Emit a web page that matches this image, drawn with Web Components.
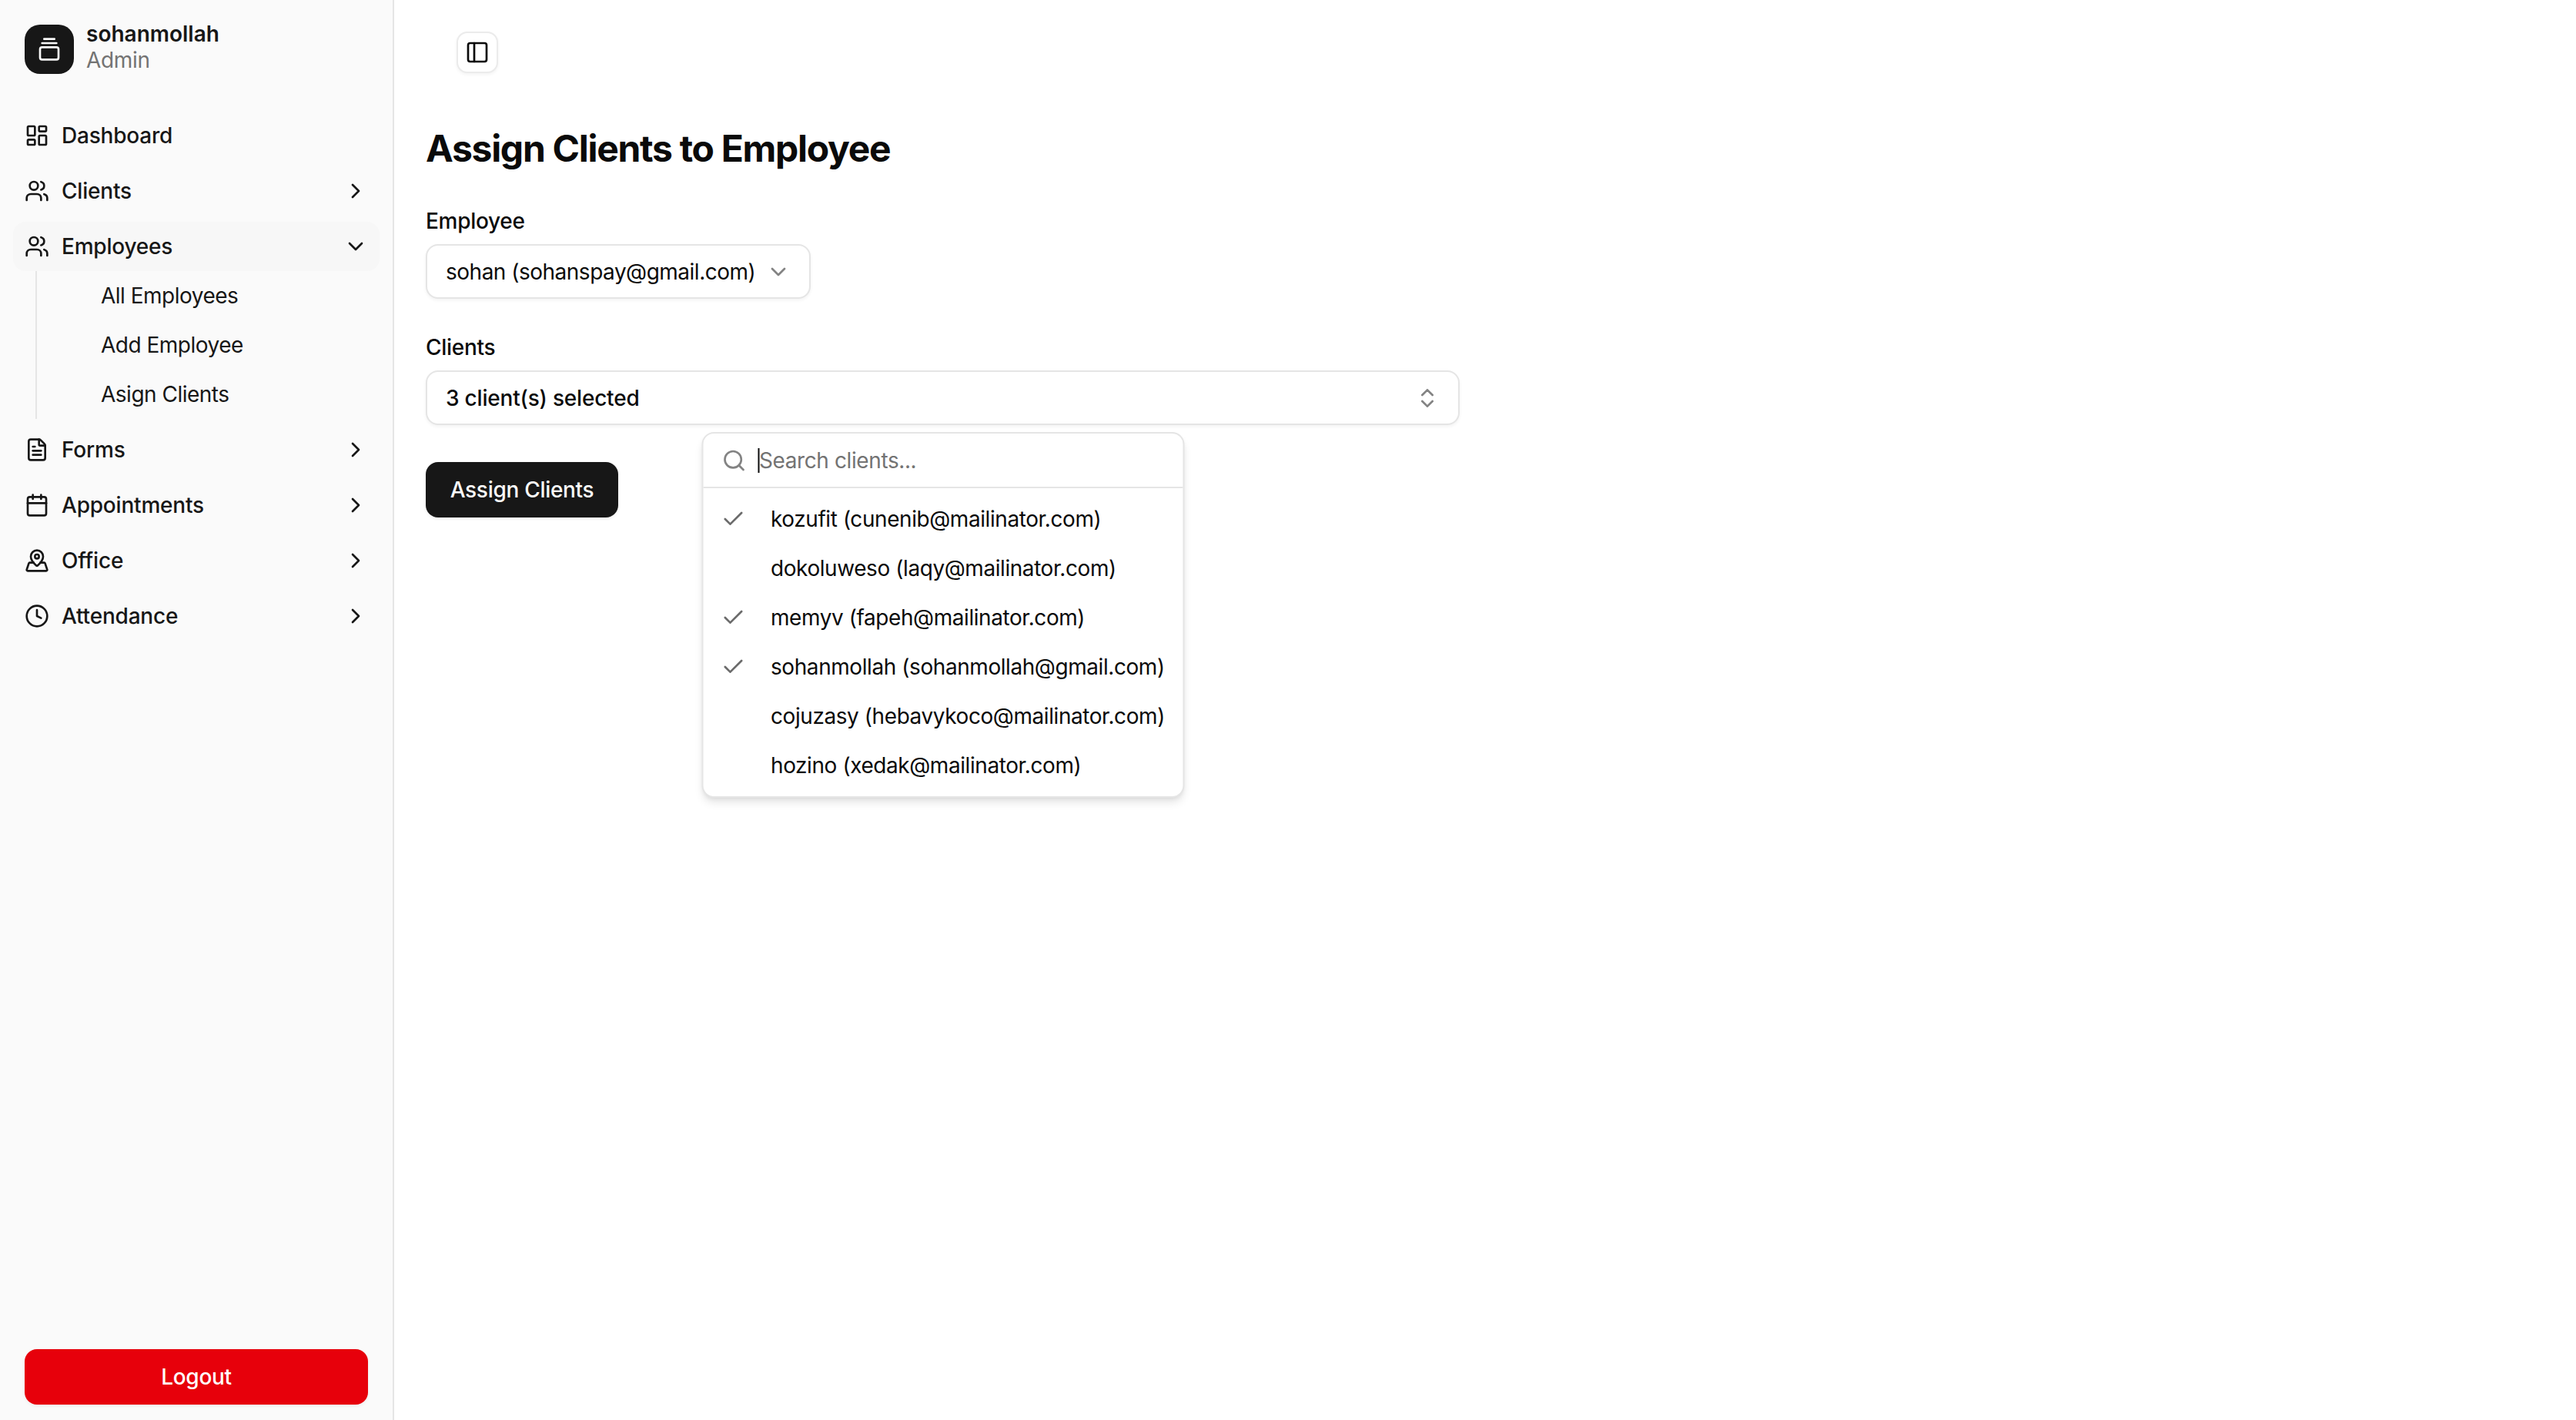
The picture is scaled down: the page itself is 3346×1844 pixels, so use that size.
<!DOCTYPE html>
<html lang="en">
<head>
<meta charset="utf-8">
<title>Assign Clients to Employee</title>
<style>
  html, body { margin: 0; height: 100%; background: #fff; }
  body { font-family: Inter, "Liberation Sans", sans-serif; font-size: 28px; line-height: 40px; color: #0a0a0a; }
</style>
</head>
<body>
<app-shell>
  <side-bar slot="side" name="sohanmollah" role-name="Admin">
    <nav-item icon="dashboard">Dashboard</nav-item>
    <nav-item icon="users" arrow="right">Clients</nav-item>
    <nav-item icon="users" arrow="down" active>Employees</nav-item>
    <sub-nav>
      <sub-item>All Employees</sub-item>
      <sub-item>Add Employee</sub-item>
      <sub-item>Asign Clients</sub-item>
    </sub-nav>
    <nav-item icon="file" arrow="right">Forms</nav-item>
    <nav-item icon="calendar" arrow="right">Appointments</nav-item>
    <nav-item icon="pin" arrow="right">Office</nav-item>
    <nav-item icon="clock" arrow="right">Attendance</nav-item>
  </side-bar>
  <assign-form>
    <select-box slot="employee" label="Employee" icon="down" style="--box-width:500px">sohan (sohanspay@gmail.com)</select-box>
    <select-box slot="clients" label="Clients" icon="updown" style="--value-weight:500;--value-spacing:-.2px">
      3 client(s) selected
      <client-popover slot="popover" placeholder="Search clients...">
        <client-option checked>kozufit (cunenib@mailinator.com)</client-option>
        <client-option>dokoluweso (laqy@mailinator.com)</client-option>
        <client-option checked>memyv (fapeh@mailinator.com)</client-option>
        <client-option checked>sohanmollah (sohanmollah@gmail.com)</client-option>
        <client-option>cojuzasy (hebavykoco@mailinator.com)</client-option>
        <client-option>hozino (xedak@mailinator.com)</client-option>
      </client-popover>
    </select-box>
  </assign-form>
</app-shell>

<script>
const ICONS = {
  logo: '<path d="M7 2h10"/><path d="M5 6h14"/><rect width="18" height="12" x="3" y="10" rx="2"/>',
  dashboard: '<rect width="7" height="9" x="3" y="3" rx="1"/><rect width="7" height="5" x="14" y="3" rx="1"/><rect width="7" height="9" x="14" y="12" rx="1"/><rect width="7" height="5" x="3" y="16" rx="1"/>',
  users: '<path d="M16 21v-2a4 4 0 0 0-4-4H6a4 4 0 0 0-4 4v2"/><path d="M16 3.128a4 4 0 0 1 0 7.744"/><path d="M22 21v-2a4 4 0 0 0-3-3.87"/><circle cx="9" cy="7" r="4"/>',
  file: '<path d="M6 22a2 2 0 0 1-2-2V4a2 2 0 0 1 2-2h8a2.4 2.4 0 0 1 1.704.706l3.588 3.588A2.4 2.4 0 0 1 20 8v12a2 2 0 0 1-2 2z"/><path d="M14 2v5a1 1 0 0 0 1 1h5"/><path d="M10 9H8"/><path d="M16 13H8"/><path d="M16 17H8"/>',
  calendar: '<path d="M8 2v4"/><path d="M16 2v4"/><rect width="18" height="18" x="3" y="4" rx="2"/><path d="M3 10h18"/>',
  pin: '<path d="M18 8c0 3.613-3.869 7.429-5.393 8.795a1 1 0 0 1-1.214 0C9.87 15.429 6 11.613 6 8a6 6 0 0 1 12 0"/><circle cx="12" cy="8" r="2"/><path d="M8.714 14h-3.71a1 1 0 0 0-.948.683l-2.004 6A1 1 0 0 0 3 22h18a1 1 0 0 0 .948-1.316l-2-6a1 1 0 0 0-.949-.684h-3.712"/>',
  clock: '<circle cx="12" cy="12" r="10"/><path d="M12 6v6l4 2"/>',
  right: '<path d="m9 18 6-6-6-6"/>',
  down: '<path d="m6 9 6 6 6-6"/>',
  updown: '<path d="m7 15 5 5 5-5"/><path d="m7 9 5-5 5 5"/>',
  panel: '<rect width="18" height="18" x="3" y="3" rx="2"/><path d="M9 3v18"/>',
  search: '<path d="m21 21-4.34-4.34"/><circle cx="11" cy="11" r="8"/>',
  check: '<path d="M20 6 9 17l-5-5"/>'
};

class UiIcon extends HTMLElement {
  static get observedAttributes() { return ["name"]; }
  constructor() {
    super();
    this.attachShadow({ mode: "open" });
  }
  connectedCallback() { this.render(); }
  attributeChangedCallback() { this.render(); }
  render() {
    const size = this.getAttribute("size") || 32;
    this.shadowRoot.innerHTML = `
      <style>
        :host { display: block; width: ${size}px; height: ${size}px; flex: none; }
        svg { display: block; }
      </style>
      <svg xmlns="http://www.w3.org/2000/svg" width="${size}" height="${size}" viewBox="0 0 24 24" fill="none"
        stroke="currentColor" stroke-width="2" stroke-linecap="round" stroke-linejoin="round">${ICONS[this.getAttribute("name")] || ""}</svg>`;
  }
}
customElements.define("ui-icon", UiIcon);

const shellTemplate = document.createElement("template");
shellTemplate.innerHTML = `
  <style>
    :host { display: flex; min-height: 1844px; }
    main { flex: 1; min-width: 0; padding: 41px 0 0 41px; }
    header { padding-left: 40px; margin-bottom: 66px; }
    button {
      display: flex; align-items: center; justify-content: center;
      width: 54px; height: 54px; padding: 0; box-sizing: border-box;
      background: #fff; color: #0a0a0a;
      border: 2px solid #ebebeb; border-radius: 14px;
      box-shadow: 0 2px 4px rgba(0,0,0,.05);
    }
  </style>
  <slot name="side"></slot>
  <main>
    <header><button><ui-icon name="panel"></ui-icon></button></header>
    <slot></slot>
  </main>`;
customElements.define("app-shell", class extends HTMLElement {
  constructor() {
    super().attachShadow({ mode: "open" }).appendChild(shellTemplate.content.cloneNode(true));
  }
});

const sidebarTemplate = document.createElement("template");
sidebarTemplate.innerHTML = `
  <style>
    :host {
      display: flex; flex-direction: column; flex: none; box-sizing: border-box;
      width: 512px; min-height: 1844px; padding: 32px 16px 20px;
      background: #fafafa; border-right: 2px solid #e5e5e5;
    }
    .brand { display: flex; gap: 16px; padding-left: 16px; margin-bottom: 48px; }
    .logo {
      display: flex; align-items: center; justify-content: center;
      width: 64px; height: 64px; border-radius: 20px; background: #171717; color: #fafafa;
    }
    .who { line-height: 34px; margin-top: -5px; }
    .name { font-weight: 600; color: #171717; }
    .role { color: #737373; letter-spacing: -.3px; }
    nav { display: flex; flex-direction: column; gap: 8px; flex: 1; }
    .logout {
      margin: 0 16px; height: 72px; border: 0; border-radius: 16px;
      background: #e7000b; color: #fff; font: 500 28px Inter, "Liberation Sans", sans-serif;
      letter-spacing: -.3px;
      box-shadow: 0 2px 4px rgba(0,0,0,.05);
    }
  </style>
  <div class="brand">
    <div class="logo"><ui-icon name="logo"></ui-icon></div>
    <div class="who"><div class="name"></div><div class="role"></div></div>
  </div>
  <nav><slot></slot></nav>
  <button class="logout">Logout</button>`;
customElements.define("side-bar", class extends HTMLElement {
  constructor() {
    super().attachShadow({ mode: "open" }).appendChild(sidebarTemplate.content.cloneNode(true));
  }
  connectedCallback() {
    this.shadowRoot.querySelector(".name").textContent = this.getAttribute("name");
    this.shadowRoot.querySelector(".role").textContent = this.getAttribute("role-name");
  }
});

const navTemplate = document.createElement("template");
navTemplate.innerHTML = `
  <style>
    :host {
      display: flex; align-items: center; gap: 16px; box-sizing: border-box;
      height: 64px; margin: 0 1px; padding: 0 15px; border-radius: 16px;
      font-weight: 500; color: #171717; letter-spacing: -.2px;
    }
    :host([active]) { background: #f7f7f7; }
    .label { flex: 1; }
  </style>
  <ui-icon class="lead"></ui-icon>
  <span class="label"><slot></slot></span>
  <ui-icon class="arrow"></ui-icon>`;
customElements.define("nav-item", class extends HTMLElement {
  constructor() {
    super().attachShadow({ mode: "open" }).appendChild(navTemplate.content.cloneNode(true));
  }
  connectedCallback() {
    this.shadowRoot.querySelector(".lead").setAttribute("name", this.getAttribute("icon"));
    const arrow = this.getAttribute("arrow");
    if (arrow) this.shadowRoot.querySelector(".arrow").setAttribute("name", arrow);
  }
});

customElements.define("sub-nav", class extends HTMLElement {
  constructor() {
    super().attachShadow({ mode: "open" }).innerHTML = `
      <style>
        :host {
          display: flex; flex-direction: column; gap: 8px;
          margin: -8px 0 0 30px; padding: 4px 0; border-left: 2px solid #e5e5e5;
        }
      </style>
      <slot></slot>`;
  }
});

customElements.define("sub-item", class extends HTMLElement {
  constructor() {
    super().attachShadow({ mode: "open" }).innerHTML = `
      <style>
        :host { display: flex; align-items: center; height: 56px; padding-left: 83px; color: #171717; letter-spacing: -.5px; }
      </style>
      <slot></slot>`;
  }
});

const formTemplate = document.createElement("template");
formTemplate.innerHTML = `
  <style>
    :host { display: block; width: 1343px; }
    h1 { margin: 0 0 42px; font-size: 48px; line-height: 64px; font-weight: 700; letter-spacing: -1.3px; color: #0a0a0a; }
    .fields { display: flex; flex-direction: column; gap: 43px; }
    button {
      display: block; margin-top: 48px; width: 250px; height: 72px; border: 0; border-radius: 16px;
      background: #171717; color: #fafafa; font: 500 28px Inter, "Liberation Sans", sans-serif;
      letter-spacing: -.3px;
      box-shadow: 0 2px 4px rgba(0,0,0,.05);
    }
  </style>
  <h1>Assign Clients to Employee</h1>
  <div class="fields">
    <slot name="employee"></slot>
    <slot name="clients"></slot>
  </div>
  <button>Assign Clients</button>`;
customElements.define("assign-form", class extends HTMLElement {
  constructor() {
    super().attachShadow({ mode: "open" }).appendChild(formTemplate.content.cloneNode(true));
  }
});

const selectTemplate = document.createElement("template");
selectTemplate.innerHTML = `
  <style>
    :host { display: block; position: relative; }
    label { display: block; margin-bottom: 10px; font-weight: 500; letter-spacing: -.3px; }
    .box {
      display: flex; align-items: center; justify-content: space-between; box-sizing: border-box;
      width: var(--box-width, 100%); height: 71px; padding: 0 24px;
      background: #fff; border: 2px solid #e5e5e5; border-radius: 16px;
      box-shadow: 0 2px 4px rgba(0,0,0,.05);
    }
    .box span { white-space: nowrap; font-weight: var(--value-weight, 400); letter-spacing: var(--value-spacing, -.5px); }
    ui-icon { color: #0a0a0a; opacity: .5; }
    .pop { position: absolute; top: 100%; left: 50%; transform: translateX(-50%); margin-top: 9px; }
  </style>
  <label></label>
  <div class="box"><span><slot></slot></span><ui-icon></ui-icon></div>
  <div class="pop"><slot name="popover"></slot></div>`;
customElements.define("select-box", class extends HTMLElement {
  constructor() {
    super().attachShadow({ mode: "open" }).appendChild(selectTemplate.content.cloneNode(true));
  }
  connectedCallback() {
    this.shadowRoot.querySelector("label").textContent = this.getAttribute("label");
    this.shadowRoot.querySelector("ui-icon").setAttribute("name", this.getAttribute("icon"));
  }
});

const popoverTemplate = document.createElement("template");
popoverTemplate.innerHTML = `
  <style>
    :host {
      display: block; box-sizing: border-box; width: 627px; font-weight: 400;
      background: #fff; border: 2px solid #e5e5e5; border-radius: 16px;
      box-shadow: 0 8px 12px -2px rgba(0,0,0,.1), 0 3px 6px -3px rgba(0,0,0,.1);
    }
    .search {
      display: flex; align-items: center; gap: 15px; box-sizing: border-box;
      height: 71px; padding: 0 24px; border-bottom: 2px solid #e5e5e5;
    }
    .search ui-icon { color: #0a0a0a; opacity: .5; }
    .field { border-left: 2px solid #0a0a0a; height: 32px; line-height: 32px; color: #737373; white-space: nowrap; letter-spacing: -.4px; }
    .list { display: flex; flex-direction: column; padding: 8px; }
  </style>
  <div class="search"><ui-icon name="search" size="32"></ui-icon><div class="field"></div></div>
  <div class="list"><slot></slot></div>`;
customElements.define("client-popover", class extends HTMLElement {
  constructor() {
    super().attachShadow({ mode: "open" }).appendChild(popoverTemplate.content.cloneNode(true));
  }
  connectedCallback() {
    this.shadowRoot.querySelector(".field").textContent = this.getAttribute("placeholder");
  }
});

const optionTemplate = document.createElement("template");
optionTemplate.innerHTML = `
  <style>
    :host {
      display: flex; align-items: center; gap: 33px; height: 64px; padding-left: 15px;
      white-space: nowrap; color: #0a0a0a; letter-spacing: -.43px;
    }
    ui-icon { color: #0a0a0a; opacity: .6; visibility: hidden; }
    :host([checked]) ui-icon { visibility: visible; }
  </style>
  <ui-icon name="check"></ui-icon>
  <slot></slot>`;
customElements.define("client-option", class extends HTMLElement {
  constructor() {
    super().attachShadow({ mode: "open" }).appendChild(optionTemplate.content.cloneNode(true));
  }
});
</script>
</body>
</html>
